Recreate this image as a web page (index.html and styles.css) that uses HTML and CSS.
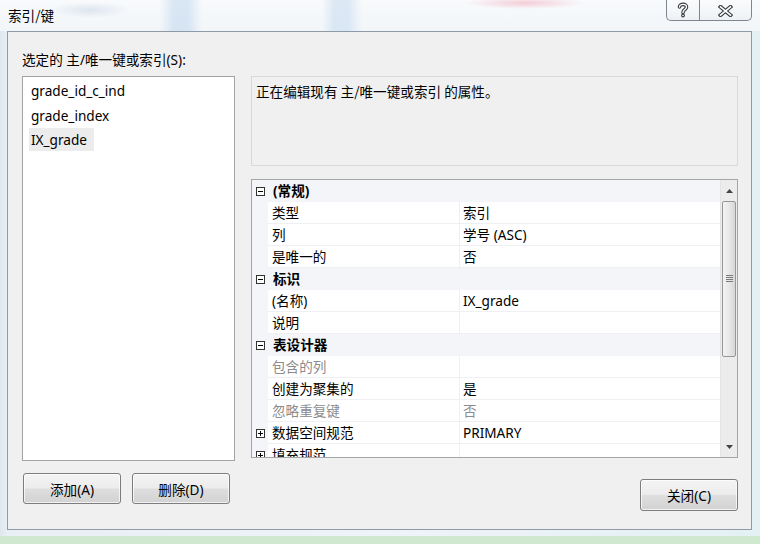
FILE: index.html
```html
<!DOCTYPE html>
<html lang="zh">
<head>
<meta charset="utf-8">
<title>索引/键</title>
<link rel="stylesheet" href="styles.css">
</head>
<body>
<div class="screen">
  <div class="titlebar">
    <span class="title">索引/键</span>
    <div class="caption">
      <div class="cbtn help">
        <svg width="12" height="16" viewBox="0 0 12 16">
          <path d="M2.5 5 C2.5 1.5 9.5 1.5 9.5 5 C9.5 7.5 6 7.5 6 10.5" fill="none" stroke="#3a3f45" stroke-width="3.6" stroke-linecap="round"/>
          <circle cx="6" cy="13.5" r="1.9" fill="#3a3f45"/>
          <path d="M2.5 5 C2.5 1.5 9.5 1.5 9.5 5 C9.5 7.5 6 7.5 6 10.5" fill="none" stroke="#fff" stroke-width="1.4" stroke-linecap="round"/>
          <circle cx="6" cy="13.5" r="0.8" fill="#fff"/>
        </svg>
      </div>
      <div class="cbtn close">
        <svg width="15" height="12" viewBox="0 0 15 12">
          <path d="M2.5 1.8 L12.5 10.2 M12.5 1.8 L2.5 10.2" fill="none" stroke="#3a3f45" stroke-width="3.8" stroke-linecap="square"/>
          <path d="M2.5 1.8 L12.5 10.2 M12.5 1.8 L2.5 10.2" fill="none" stroke="#fff" stroke-width="1.6" stroke-linecap="square"/>
        </svg>
      </div>
    </div>
  </div>

  <div class="client">
    <div class="label">选定的 主/唯一键或索引(S):</div>
    <div class="main">
      <div class="leftcol">
        <ul class="list">
          <li><span class="item">grade_id_c_ind</span></li>
          <li><span class="item">grade_index</span></li>
          <li><span class="item selected">IX_grade</span></li>
        </ul>
        <div class="btnrow">
          <button class="btn">添加(A)</button>
          <button class="btn">删除(D)</button>
        </div>
      </div>

      <div class="rightcol">
        <div class="desc">正在编辑现有 主/唯一键或索引 的属性。</div>
        <div class="propgrid">
          <div class="rows">
            <div class="row cat">
              <span class="gutter"><svg class="box" width="9" height="9" viewBox="0 0 9 9"><rect x="0.5" y="0.5" width="8" height="8" fill="#fff" stroke="#333"/><path d="M2 4.5 H7" stroke="#000"/></svg></span>
              <span class="catname">(常规)</span>
            </div>
            <div class="row"><span class="gutter"></span><span class="name">类型</span><span class="value">索引</span></div>
            <div class="row"><span class="gutter"></span><span class="name">列</span><span class="value">学号 (ASC)</span></div>
            <div class="row"><span class="gutter"></span><span class="name">是唯一的</span><span class="value">否</span></div>
            <div class="row cat">
              <span class="gutter"><svg class="box" width="9" height="9" viewBox="0 0 9 9"><rect x="0.5" y="0.5" width="8" height="8" fill="#fff" stroke="#333"/><path d="M2 4.5 H7" stroke="#000"/></svg></span>
              <span class="catname">标识</span>
            </div>
            <div class="row"><span class="gutter"></span><span class="name">(名称)</span><span class="value">IX_grade</span></div>
            <div class="row"><span class="gutter"></span><span class="name">说明</span><span class="value"></span></div>
            <div class="row cat">
              <span class="gutter"><svg class="box" width="9" height="9" viewBox="0 0 9 9"><rect x="0.5" y="0.5" width="8" height="8" fill="#fff" stroke="#333"/><path d="M2 4.5 H7" stroke="#000"/></svg></span>
              <span class="catname">表设计器</span>
            </div>
            <div class="row"><span class="gutter"></span><span class="name dis">包含的列</span><span class="value"></span></div>
            <div class="row"><span class="gutter"></span><span class="name">创建为聚集的</span><span class="value">是</span></div>
            <div class="row"><span class="gutter"></span><span class="name dis">忽略重复键</span><span class="value dis">否</span></div>
            <div class="row">
              <span class="gutter"><svg class="box" width="9" height="9" viewBox="0 0 9 9"><rect x="0.5" y="0.5" width="8" height="8" fill="#fff" stroke="#333"/><path d="M2 4.5 H7 M4.5 2 V7" stroke="#000"/></svg></span>
              <span class="name">数据空间规范</span><span class="value">PRIMARY</span>
            </div>
            <div class="row">
              <span class="gutter"><svg class="box" width="9" height="9" viewBox="0 0 9 9"><rect x="0.5" y="0.5" width="8" height="8" fill="#fff" stroke="#333"/><path d="M2 4.5 H7 M4.5 2 V7" stroke="#000"/></svg></span>
              <span class="name">填充规范</span><span class="value"></span>
            </div>
          </div>
          <div class="scrollbar">
            <div class="sbtn"><svg width="7" height="4" viewBox="0 0 7 4"><path d="M0 4 L3.5 0 L7 4 Z" fill="#444"/></svg></div>
            <div class="thumb">
              <svg width="7" height="8" viewBox="0 0 7 8"><path d="M0 0.5 H7 M0 2.5 H7 M0 4.5 H7 M0 6.5 H7" stroke="#7a7a7a"/></svg>
            </div>
            <div class="track"></div>
            <div class="sbtn"><svg width="7" height="4" viewBox="0 0 7 4"><path d="M0 0 L7 0 L3.5 4 Z" fill="#444"/></svg></div>
          </div>
        </div>
        <div class="closerow">
          <button class="btn">关闭(C)</button>
        </div>
      </div>
    </div>
  </div>

  <div class="framebottom"></div>
  <div class="desktop"></div>
</div>
</body>
</html>
```

FILE: styles.css
```css
* {
  box-sizing: border-box;
}

html,
body {
  margin: 0;
  padding: 0;
}

body {
  width: 760px;
  height: 544px;
  overflow: hidden;
  font-family: "Noto Sans", "Noto Sans CJK SC", sans-serif;
  font-size: 13.6px;
  color: #000;
}

.screen {
  width: 760px;
  height: 544px;
  display: flex;
  flex-direction: column;
  background: linear-gradient(90deg, #dfe8f0 0px, #e8eff5 7px, #eef3f7 50%, #e4f1f4 100%);
}

.titlebar {
  height: 31px;
  flex: none;
  display: flex;
  justify-content: space-between;
  align-items: flex-start;
  padding: 0 8px 0 8px;
  background:
    radial-gradient(ellipse 60px 6px at 525px 3px, rgba(240, 150, 170, 0.45), transparent),
    radial-gradient(ellipse 40px 8px at 90px 10px, rgba(150, 170, 200, 0.25), transparent),
    linear-gradient(90deg,
      transparent 160px, rgba(180, 206, 235, 0.45) 174px, rgba(180, 206, 235, 0.45) 188px, transparent 202px,
      transparent 322px, rgba(180, 206, 235, 0.4) 334px, rgba(180, 206, 235, 0.4) 348px, transparent 362px),
    linear-gradient(180deg, #f8fafc 0%, #f2f6f9 100%);
}

.title {
  line-height: 30px;
  font-family: "Noto Sans CJK SC", sans-serif;
}

.caption {
  display: flex;
}

.cbtn {
  height: 21px;
  border: 1px solid #7e8790;
  border-top: none;
  background: linear-gradient(180deg, #fbfcfd 0%, #eef1f4 100%);
  display: flex;
  align-items: center;
  justify-content: center;
}

.help {
  width: 33px;
  border-right: none;
  border-radius: 0 0 0 5px;
}

.close {
  width: 53px;
  border-radius: 0 0 5px 0;
}

.close svg {
  margin-top: 1px;
}

.client {
  flex: none;
  margin-left: 7px;
  width: 745px;
  height: 499px;
  border: 1px solid #8e9aa6;
  background: #f0f0f0;
  padding: 20px 13px 0 14px;
}

.label {
  height: 16px;
  line-height: 16px;
  margin-bottom: 8px;
  white-space: nowrap;
}

.main {
  display: grid;
  grid-template-columns: 213px 487px;
  column-gap: 16px;
}

.leftcol {
  display: flex;
  flex-direction: column;
}

.list {
  list-style: none;
  margin: 0;
  padding: 2px 0 0 6px;
  height: 385px;
  background: #fff;
  border: 1px solid #a3a3a3;
}

.list li {
  height: 24.5px;
  line-height: 23px;
}

.item {
  display: inline-block;
  padding: 0 2px;
  height: 23px;
}

.item.selected {
  padding-right: 7px;
  background: #ececec;
}

.btnrow {
  display: flex;
  gap: 11px;
  padding-left: 1px;
  margin-top: 12px;
}

.btn {
  width: 98px;
  height: 31px;
  padding: 0;
  border: 1px solid #7d7d7d;
  border-radius: 3px;
  background: linear-gradient(180deg, #f4f4f4 0%, #ececec 48%, #dedede 52%, #d2d2d2 100%);
  box-shadow: inset 0 0 0 1px rgba(255, 255, 255, 0.7);
  font-family: "Noto Sans", "Noto Sans CJK SC", sans-serif;
  font-size: 13.6px;
  color: #000;
}

.rightcol {
  display: flex;
  flex-direction: column;
}

.desc {
  height: 90px;
  border: 1px solid #d9d9d9;
  background: #f0f0f0;
  padding: 5px 4px;
  line-height: 18px;
  font-family: "Noto Sans CJK SC", sans-serif;
}

.propgrid {
  margin-top: 13px;
  height: 279px;
  border: 1px solid #a5a5a5;
  background: #fff;
  display: flex;
  overflow: hidden;
}

.rows {
  flex: 1;
  display: flex;
  flex-direction: column;
}

.row {
  flex: none;
  height: 22px;
  display: grid;
  grid-template-columns: 16px 192px 1fr;
  border-bottom: 1px solid #eef0f4;
  line-height: 22px;
}

.gutter {
  background: #f3f5f9;
  display: flex;
  align-items: center;
  justify-content: center;
}

.box {
  display: block;
}

.name {
  padding-left: 4px;
  border-right: 1px solid #eef0f4;
  white-space: nowrap;
}

.value {
  padding-left: 3px;
  white-space: nowrap;
}

.dis {
  color: #8c8c8c;
}

.row.cat {
  background: #f3f5f9;
  border-bottom-color: #f3f5f9;
}

.catname {
  grid-column: 2 / 4;
  padding-left: 5px;
  font-weight: bold;
}

.scrollbar {
  flex: none;
  width: 17px;
  background: #ececec;
  border-left: 1px solid #e4e4e4;
  display: flex;
  flex-direction: column;
}

.sbtn {
  flex: none;
  height: 21px;
  display: flex;
  align-items: center;
  justify-content: center;
}

.thumb {
  flex: none;
  height: 156px;
  margin: 0 1px;
  border: 1px solid #979797;
  border-radius: 2px;
  background: linear-gradient(90deg, #f3f3f3 0%, #e8e8e8 50%, #d6d6d6 100%);
  display: flex;
  align-items: center;
  justify-content: center;
}

.track {
  flex: 1;
}

.closerow {
  margin-top: 21px;
  display: flex;
  justify-content: flex-end;
}

.closerow .btn {
  height: 32px;
}

.framebottom {
  flex: none;
  height: 6px;
}

.desktop {
  flex: 1;
  background: #cfe8cf;
}
```
